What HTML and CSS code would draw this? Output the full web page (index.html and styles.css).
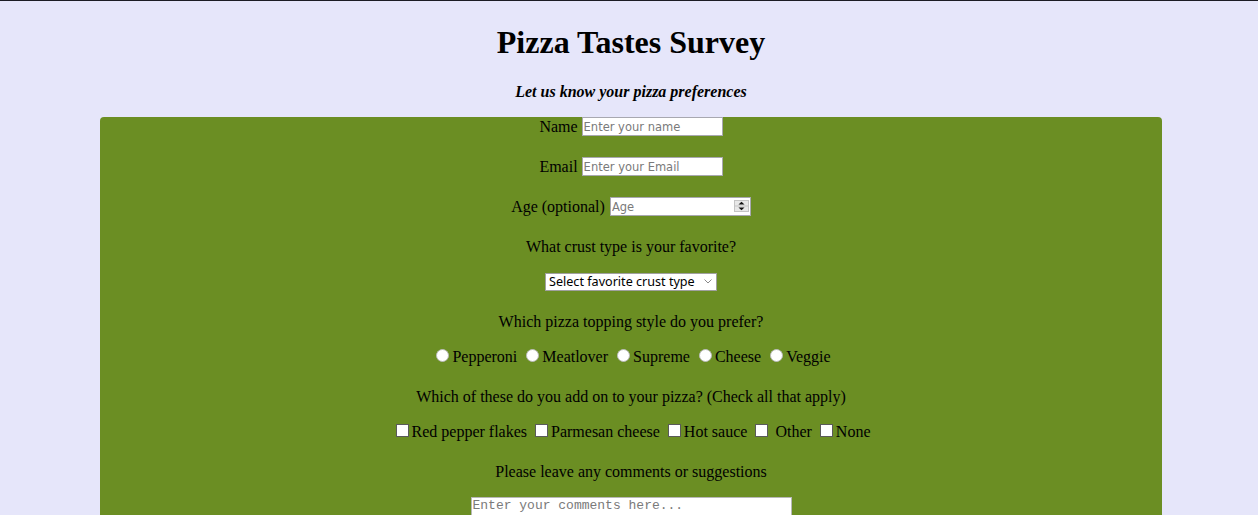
FILE: index.html
```html
<!DOCTYPE html>
<html lang="en">
<head>
<meta charset="utf-8">
<title>Pizza Tastes Survey</title>
<link rel="stylesheet" href="styles.css">
</head>
<body>
<h1 class="title">Pizza Tastes Survey</h1>
<p class="subtitle">Let us know your pizza preferences</p>
<form class="survey">
  <div class="field">
    <label for="name">Name</label>
    <input id="name" class="text-input" type="text" placeholder="Enter your name">
  </div>
  <div class="field">
    <label for="email">Email</label>
    <input id="email" class="text-input" type="email" placeholder="Enter your Email">
  </div>
  <div class="field">
    <label for="age">Age (optional)</label>
    <span class="number-wrap">
      <input id="age" class="text-input number-input" type="number" placeholder="Age">
      <svg class="spin" width="15" height="12" viewBox="0 0 15 12" aria-hidden="true">
        <rect x="0.5" y="0.5" width="14" height="11" fill="#e8e8e8" stroke="#c4c4c4"/>
        <line x1="1" y1="6" x2="14" y2="6" stroke="#c4c4c4"/>
        <path d="M4.5 4.5 L7.5 1.8 L10.5 4.5 Z" fill="#111"/>
        <path d="M4.5 7.5 L10.5 7.5 L7.5 10.2 Z" fill="#111"/>
      </svg>
    </span>
  </div>

  <p class="question">What crust type is your favorite?</p>
  <div class="answer">
    <span class="select-wrap">
      <select class="crust-select">
        <option>Select favorite crust type</option>
        <option>Thin crust</option>
        <option>Thick crust</option>
        <option>Stuffed crust</option>
      </select>
      <svg class="chevron" width="8" height="5" viewBox="0 0 8 5" aria-hidden="true">
        <polyline points="0.5,0.5 4,4 7.5,0.5" fill="none" stroke="#8a8a8a" stroke-width="1"/>
      </svg>
    </span>
  </div>

  <p class="question">Which pizza topping style do you prefer?</p>
  <div class="answer">
    <input class="radio" type="radio" name="topping" id="t1"><label for="t1">Pepperoni</label>
    <input class="radio" type="radio" name="topping" id="t2"><label for="t2">Meatlover</label>
    <input class="radio" type="radio" name="topping" id="t3"><label for="t3">Supreme</label>
    <input class="radio" type="radio" name="topping" id="t4"><label for="t4">Cheese</label>
    <input class="radio" type="radio" name="topping" id="t5"><label for="t5">Veggie</label>
  </div>

  <p class="question">Which of these do you add on to your pizza? (Check all that apply)</p>
  <div class="answer">
    <input class="check" type="checkbox" id="a1"><label for="a1">Red pepper flakes</label>
    <input class="check" type="checkbox" id="a2"><label for="a2">Parmesan cheese</label>
    <input class="check" type="checkbox" id="a3"><label for="a3">Hot sauce</label>
    <input class="check" type="checkbox" id="a4"> <label for="a4">Other</label>
    <input class="check" type="checkbox" id="a5"><label for="a5">None</label>
  </div>

  <p class="question">Please leave any comments or suggestions</p>
  <textarea class="comments" placeholder="Enter your comments here..."></textarea>
</form>
</body>
</html>
```

FILE: styles.css
```css
html {
  background: #e6e6fa;
}

body {
  margin: 0;
  padding: 0 0 0 4px;
  border-top: 1px solid #1c1c24;
  font-family: "Liberation Serif", "Times New Roman", serif;
  font-size: 16px;
  color: #000;
  text-align: center;
}

.title {
  margin: 23px 0 22px;
  font-size: 32px;
  font-weight: bold;
  line-height: 36.8px;
}

.subtitle {
  margin: 0 0 15.8px;
  font-weight: bold;
  font-style: italic;
  line-height: 18.4px;
}

.survey {
  width: 1062px;
  margin: 0 auto;
  background: #6b8e23;
  border-radius: 4px;
  padding: 0 0 40px;
}

.field {
  display: flex;
  justify-content: center;
  align-items: center;
  gap: 4px;
  height: 19px;
}

.field label {
  padding-top: 1px;
}

.field + .field {
  margin-top: 21px;
}

.text-input {
  box-sizing: border-box;
  width: 141px;
  height: 19px;
  margin: 0;
  padding: 1px 1px 0;
  border: 1px solid #a8a8b0;
  background: #fff;
  font-family: "DejaVu Sans", sans-serif;
  font-size: 11.5px;
  color: #000;
  outline: none;
}

.text-input::placeholder,
.comments::placeholder {
  color: #7a7a7a;
}

.number-wrap {
  position: relative;
  display: inline-block;
  height: 19px;
  margin-left: 1px;
}

.number-input {
  -moz-appearance: textfield;
}

.number-input::-webkit-inner-spin-button,
.number-input::-webkit-outer-spin-button {
  -webkit-appearance: none;
  margin: 0;
}

.spin {
  position: absolute;
  right: 2px;
  top: 3px;
}

.question {
  margin: 22px 0 0;
  line-height: 18px;
}

.answer {
  margin-top: 17px;
  height: 18px;
  line-height: 18px;
}

.select-wrap {
  position: relative;
  display: inline-block;
  vertical-align: top;
}

.crust-select {
  -webkit-appearance: none;
  appearance: none;
  box-sizing: border-box;
  width: 172px;
  height: 18px;
  margin: 0;
  padding: 0 0 0 3px;
  border: 1px solid #a0a0a0;
  border-radius: 0;
  background: #fff;
  color: #000;
  font-family: "Noto Sans", sans-serif;
  font-size: 12.6px;
  line-height: 16px;
  display: block;
}

.chevron {
  position: absolute;
  right: 5px;
  top: 6px;
}

.radio {
  -webkit-appearance: none;
  appearance: none;
  box-sizing: border-box;
  width: 13px;
  height: 13px;
  margin: 0 3px 0 5px;
  border: 1px solid #bcbcbc;
  border-radius: 50%;
  background: #fff;
  vertical-align: baseline;
}

.check {
  -webkit-appearance: none;
  appearance: none;
  box-sizing: border-box;
  width: 13px;
  height: 13px;
  margin: 0 3px 0 4px;
  border: 1px solid #5a5a5a;
  border-radius: 0;
  background: #fff;
  vertical-align: baseline;
}

.comments {
  display: block;
  box-sizing: border-box;
  width: 321px;
  height: 32px;
  margin: 16px auto 0;
  padding: 0 1px;
  border: 1px solid #b8b8b8;
  background: #fff;
  font-family: "Liberation Mono", "Courier New", monospace;
  font-size: 13px;
  resize: none;
  outline: none;
}
```
